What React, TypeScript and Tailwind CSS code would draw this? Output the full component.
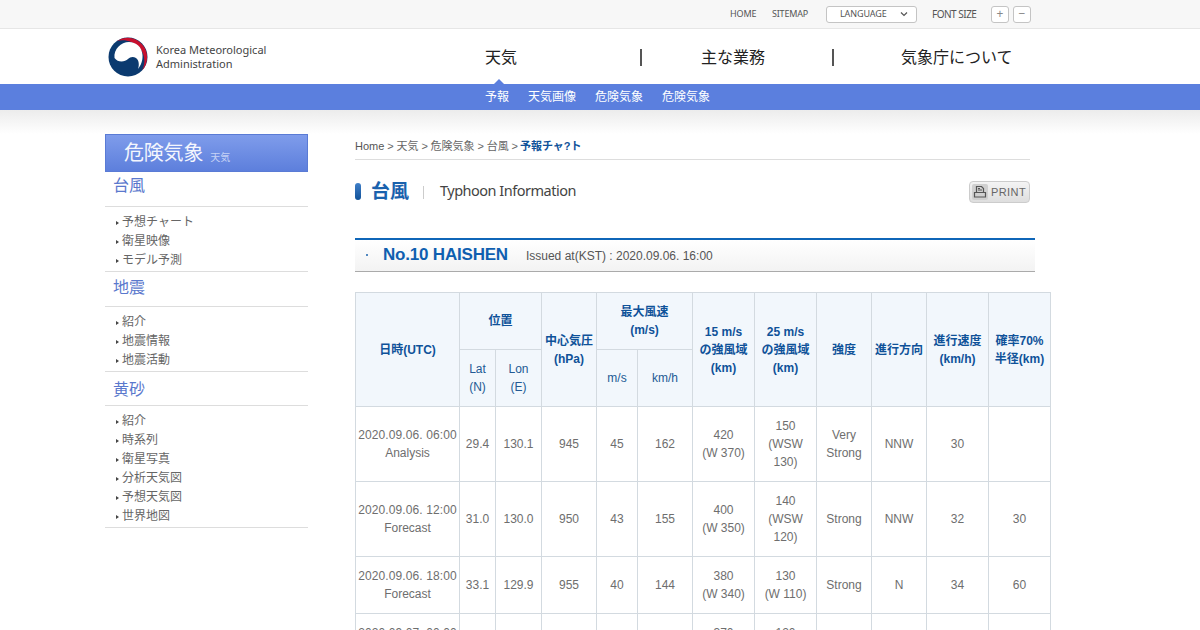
const font = "font-['Liberation_Sans','Noto_Sans_CJK_JP',sans-serif]";

const sideMenus = [
  { title: "台風", items: ["予想チャート", "衛星映像", "モデル予測"], titleH: "h-[35px] pt-[3px]" },
  { title: "地震", items: ["紹介", "地震情報", "地震活動"], titleH: "h-[35px] pt-[5px]" },
  { title: "黄砂", items: ["紹介", "時系列", "衛星写真", "分析天気図", "予想天気図", "世界地図"], titleH: "h-[34px] pt-[7px]" },
];

const rows = [
  { h: "h-[75px]", date: "2020.09.06. 06:00", kind: "Analysis", lat: "29.4", lon: "130.1", p: "945", ms: "45", kmh: "162", r15: ["420", "(W 370)"], r25: ["150", "(WSW", "130)"], power: ["Very", "Strong"], dir: "NNW", sp: "30", rad: "" },
  { h: "h-[75px]", date: "2020.09.06. 12:00", kind: "Forecast", lat: "31.0", lon: "130.0", p: "950", ms: "43", kmh: "155", r15: ["400", "(W 350)"], r25: ["140", "(WSW", "120)"], power: ["Strong"], dir: "NNW", sp: "32", rad: "30" },
  { h: "h-[57px]", date: "2020.09.06. 18:00", kind: "Forecast", lat: "33.1", lon: "129.9", p: "955", ms: "40", kmh: "144", r15: ["380", "(W 340)"], r25: ["130", "(W 110)"], power: ["Strong"], dir: "N", sp: "34", rad: "60" },
  { h: "h-[57px]", date: "2020.09.07. 00:00", kind: "Forecast", lat: "35.6", lon: "129.6", p: "960", ms: "37", kmh: "133", r15: ["370", "(W 330)"], r25: ["120", "(W 100)"], power: ["Strong"], dir: "N", sp: "40", rad: "80" },
];

function Lines({ lines }: { lines: string[] }) {
  return (
    <>
      {lines.map((l) => (
        <div key={l}>{l}</div>
      ))}
    </>
  );
}

function Logo() {
  return (
    <svg width="40" height="40" viewBox="0 0 40 40" className="shrink-0">
      <circle cx="20" cy="20" r="19.500" fill="#0b3a6f" />
      <path d="M9 4A19.500 19.500 0 0 1 34 33.500C38 26 37 17 31 10 25 4 16 2 9 4Z" fill="#c8102e" />
      <path d="M6.500 21C5.500 12 13 5 21 5c7 0 13 5 13.500 13 .3 6-1.500 10-4.500 14 1.500-4 1-9-2-11-3-2-6-1-8 1-3 3-10 4-13.500-1Z" fill="#fff" />
    </svg>
  );
}

function PrinterIcon() {
  return (
    <svg width="14" height="14" viewBox="0 0 14 14" fill="none" stroke="#555" strokeWidth="1.2">
      <path d="M3.500 7V1.500h5l2 2V7" />
      <path d="M1.500 7.500h11v4.500h-11z" />
      <path d="M5 5h4M5 3.500h2" />
    </svg>
  );
}

export default function App() {
  const th = "border border-[#d3dae0] bg-[#f2f7fc] text-[#0f5299] font-bold text-[12px] leading-[18px] text-center p-0";
  const thLight = "border border-[#d3dae0] bg-[#f2f7fc] text-[#235a94] font-normal text-[12px] leading-[18px] text-center p-0";
  const td = "border border-[#d3dae0] text-[#6e6e6e] text-[12px] leading-[18px] text-center p-0";

  return (
    <div className={`${font} h-[630px] w-[1200px] overflow-hidden bg-white`}>
      {/* top util bar */}
      <div className="flex h-[29px] items-center border-b border-[#e6e6e6] bg-[#f7f7f7] pl-[730px] font-['Noto_Sans',sans-serif]">
        <span className="w-[27px] text-[9px] tracking-[-0.1px] text-[#555]">HOME</span>
        <span className="ml-[15px] w-[39px] text-[9px] tracking-[-0.2px] text-[#555]">SITEMAP</span>
        <div className="ml-[15px] flex h-[17px] w-[91px] items-center justify-between rounded-[3px] border border-[#c4c4c4] bg-white pl-[13px] pr-[8px] text-[9px] tracking-[-0.1px] text-[#555]">
          LANGUAGE
          <svg width="8" height="6" viewBox="0 0 8 6" fill="none" stroke="#555" strokeWidth="1.2">
            <path d="M1 1.500l3 3 3-3" />
          </svg>
        </div>
        <span className="ml-[15px] w-[49px] text-[10px] tracking-[-0.5px] text-[#555]">FONT SIZE</span>
        <div className="ml-[10px] flex gap-[4px]">
          <div className="flex h-[17px] w-[18px] items-center justify-center rounded-[3px] border border-[#c4c4c4] bg-white text-[12px] text-[#888]">+</div>
          <div className="flex h-[17px] w-[18px] items-center justify-center rounded-[3px] border border-[#c4c4c4] bg-white text-[12px] text-[#888]">−</div>
        </div>
      </div>

      {/* logo and main nav */}
      <div className="relative flex h-[55px] items-center bg-white pl-[108px]">
        <Logo />
        <div className="ml-[8px] w-[112px] text-[11px] leading-[14px] text-[#444] font-['Noto_Sans',sans-serif]">
          <div>Korea Meteorological</div>
          <div>Administration</div>
        </div>
        <div className="ml-[217px] w-[33px] pt-[2px] text-[16px] text-[#222]">天気</div>
        <div className="ml-[122px] mt-[2px] h-[17px] w-[2px] bg-[#555]" />
        <div className="ml-[59px] w-[65px] pt-[2px] text-[16px] text-[#222]">主な業務</div>
        <div className="ml-[66px] mt-[2px] h-[17px] w-[2px] bg-[#555]" />
        <div className="ml-[67px] pt-[2px] text-[16px] text-[#222]">気象庁について</div>
        <div className="absolute bottom-0 left-[494px] h-0 w-0 border-x-[5px] border-b-[5px] border-x-transparent border-b-[#5b7fde]" />
      </div>

      {/* sub nav */}
      <div className="flex h-[26px] items-center gap-[19px] bg-[#5b7fde] pl-[485px] text-[12px] text-white">
        <span>予報</span>
        <span>天気画像</span>
        <span>危険気象</span>
        <span>危険気象</span>
      </div>
      <div className="h-[24px] bg-gradient-to-b from-[#ececec] to-white" />

      <div className="flex pl-[105px]">
        {/* side column */}
        <div className="w-[203px] shrink-0">
          <div className="flex h-[38px] items-center border border-[#5a7bd5] bg-gradient-to-b from-[#7f9ceb] to-[#5d7fdc] pl-[18px] text-white">
            <span className="text-[20px] tracking-[-0.2px] text-[#f4f6fd]">危険気象</span>
            <span className="ml-[7px] mt-[8px] text-[10px] text-[#c5d2f5]">天気</span>
          </div>
          {sideMenus.map((m) => (
            <div key={m.title} className="border-b border-[#dddddd] pb-[2px]">
              <div className={`${m.titleH} border-b border-[#dddddd] pl-[8px] text-[16px] leading-[22px] text-[#5a78cd]`}>{m.title}</div>
              <ul className="pt-[5px]">
                {m.items.map((it) => (
                  <li key={it} className="flex h-[19px] items-center text-[12px] text-[#666]">
                    <span className="ml-[11px] mr-[3px] mt-[3px] h-0 w-0 border-y-[2px] border-l-[3px] border-y-transparent border-l-[#444]" />
                    {it}
                  </li>
                ))}
              </ul>
            </div>
          ))}
        </div>

        {/* main column */}
        <div className="ml-[47px] w-[696px] shrink-0">
          <div className="flex h-[26px] w-[675px] items-center border-b border-[#dddddd] text-[11px] text-[#666] [word-spacing:-0.25px]">
            <span className="text-[#555]">Home</span>
            <span className="ml-[3px]">&gt; 天気 &gt; 危険気象 &gt; 台風 &gt;</span>
            <span className="ml-[2px] font-bold text-[#0f5299]">予報チャ?ト</span>
          </div>

          <div className="mt-[21px] flex h-[22px] w-[675px] items-center">
            <span className="-mt-[1px] h-[17px] w-[6px] rounded-[3px] bg-gradient-to-b from-[#3f7fc8] to-[#0f5299]" />
            <span className="ml-[10px] text-[19px] font-bold text-[#1a62ad]">台風</span>
            <span className="ml-[14px] h-[13px] w-px bg-[#cccccc]" />
            <span className="ml-[16px] -mt-[2px] text-[14.500px] tracking-[-0.5px] text-[#444] font-['Noto_Sans',sans-serif]">Typhoon Information</span>
            <div className="ml-auto flex h-[22px] w-[61px] items-center gap-[3px] rounded-[4px] border border-[#cccccc] bg-gradient-to-b from-[#f4f4f4] to-[#dedede] pl-[2px] text-[11px] tracking-[0.4px] text-[#666]">
              <span className="flex h-[16px] w-[16px] items-center justify-center rounded-[2px] bg-[#d0d0d0]">
                <PrinterIcon />
              </span>
              PRINT
            </div>
          </div>

          <div className="mt-[35px] flex h-[34px] w-[680px] items-center border-t-2 border-b border-t-[#0f66b8] border-b-[#aaaaaa] bg-gradient-to-b from-white to-[#f3f3f3] pb-[2px]">
            <span className="ml-[11px] h-[2px] w-[2px] rounded-full bg-[#1a62ad]" />
            <span className="ml-[15px] text-[17px] font-bold tracking-[-0.2px] text-[#0f5fb0]">No.10 HAISHEN</span>
            <span className="ml-[18px] mt-[2px] text-[12px] text-[#555]">Issued at(KST) : 2020.09.06. 16:00</span>
          </div>

          <table className="mt-[20px] w-[696px] table-fixed border-collapse">
            <colgroup>
              <col className="w-[104px]" />
              <col className="w-[36px]" />
              <col className="w-[46px]" />
              <col className="w-[55px]" />
              <col className="w-[41px]" />
              <col className="w-[55px]" />
              <col className="w-[62px]" />
              <col className="w-[62px]" />
              <col className="w-[55px]" />
              <col className="w-[55px]" />
              <col className="w-[62px]" />
              <col className="w-[62px]" />
            </colgroup>
            <thead>
              <tr className="h-[57px]">
                <th rowSpan={2} className={th}>日時(UTC)</th>
                <th colSpan={2} className={th}>位置</th>
                <th rowSpan={2} className={th}>中心気圧<br />(hPa)</th>
                <th colSpan={2} className={th}>最大風速<br />(m/s)</th>
                <th rowSpan={2} className={th}>15 m/s<br />の強風域<br />(km)</th>
                <th rowSpan={2} className={th}>25 m/s<br />の強風域<br />(km)</th>
                <th rowSpan={2} className={th}>強度</th>
                <th rowSpan={2} className={th}>進行方向</th>
                <th rowSpan={2} className={th}>進行速度<br />(km/h)</th>
                <th rowSpan={2} className={th}>確率70%<br />半径(km)</th>
              </tr>
              <tr className="h-[57px]">
                <th className={thLight}>Lat<br />(N)</th>
                <th className={thLight}>Lon<br />(E)</th>
                <th className={thLight}>m/s</th>
                <th className={thLight}>km/h</th>
              </tr>
            </thead>
            <tbody>
              {rows.map((r) => (
                <tr key={r.date} className={r.h}>
                  <td className={td}><span className="tracking-[0.1px]">{r.date}</span><br />{r.kind}</td>
                  <td className={td}>{r.lat}</td>
                  <td className={td}>{r.lon}</td>
                  <td className={td}>{r.p}</td>
                  <td className={td}>{r.ms}</td>
                  <td className={td}>{r.kmh}</td>
                  <td className={td}><Lines lines={r.r15} /></td>
                  <td className={td}><Lines lines={r.r25} /></td>
                  <td className={td}><Lines lines={r.power} /></td>
                  <td className={td}>{r.dir}</td>
                  <td className={td}>{r.sp}</td>
                  <td className={td}>{r.rad}</td>
                </tr>
              ))}
            </tbody>
          </table>
        </div>
      </div>
    </div>
  );
}
